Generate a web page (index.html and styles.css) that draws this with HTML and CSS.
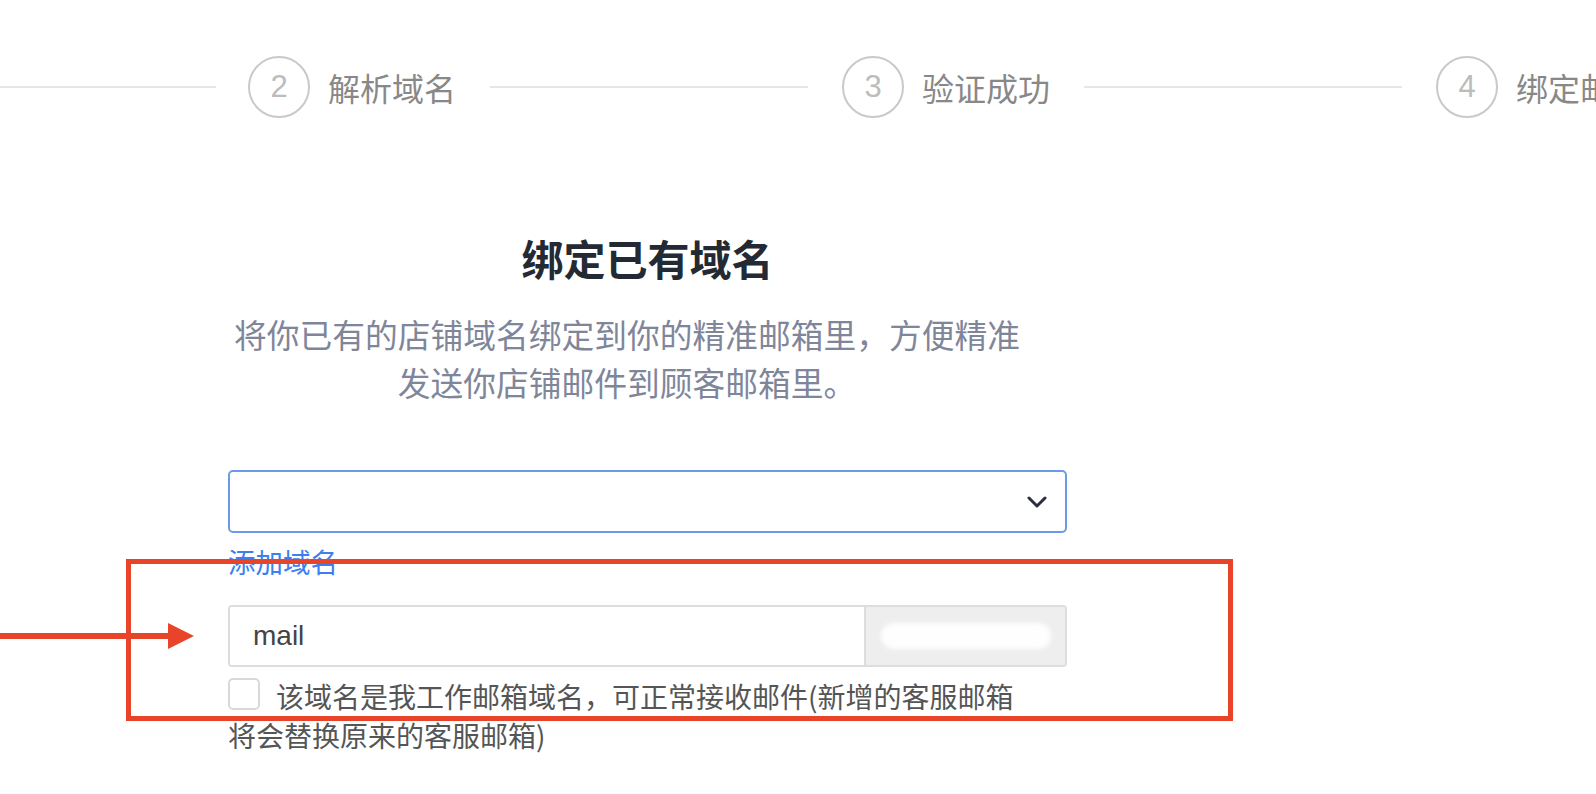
FILE: index.html
```html
<!DOCTYPE html>
<html lang="zh-CN">
<head>
<meta charset="utf-8">
<title>绑定已有域名</title>
<link rel="stylesheet" href="styles.css">
</head>
<body>
<div class="steps">
  <div class="step-line step-line-first"></div>
  <div class="step"><span class="step-num">2</span><span class="step-label">解析域名</span></div>
  <div class="step-line"></div>
  <div class="step"><span class="step-num">3</span><span class="step-label">验证成功</span></div>
  <div class="step-line"></div>
  <div class="step"><span class="step-num">4</span><span class="step-label">绑定邮箱</span></div>
</div>

<main class="form">
  <h1 class="title">绑定已有域名</h1>
  <p class="desc">将你已有的店铺域名绑定到你的精准邮箱里，方便精准<br>发送你店铺邮件到顾客邮箱里。</p>

  <div class="select">
    <span class="select-value"></span>
    <svg class="chevron" width="20" height="12" viewBox="0 0 20 12"><path d="M2 2 L10 10 L18 2" fill="none" stroke="#2a2f3d" stroke-width="3" stroke-linecap="round" stroke-linejoin="round"/></svg>
  </div>
  <a class="add-link">添加域名</a>

  <div class="input-group">
    <input class="input" type="text" value="mail">
    <div class="addon"><span class="smudge"></span></div>
  </div>

  <label class="agree"><span class="checkbox"></span>该域名是我工作邮箱域名，可正常接收邮件(新增的客服邮箱<br>将会替换原来的客服邮箱)</label>
</main>

<div class="annot-box"></div>
<svg class="annot-arrow" width="196" height="26" viewBox="0 0 196 26"><line x1="0" y1="13" x2="172" y2="13" stroke="#e8442a" stroke-width="6"/><polygon points="168,0 194,13 168,26" fill="#e8442a"/></svg>
</body>
</html>
```

FILE: styles.css
```css
html, body {
  margin: 0;
  padding: 0;
  background: #ffffff;
}
body {
  width: 1596px;
  height: 794px;
  overflow: hidden;
  position: relative;
  font-family: "Liberation Sans", "Noto Sans CJK SC", sans-serif;
}

/* steps */
.steps {
  display: flex;
  align-items: center;
  margin-top: 56px;
  height: 62px;
  width: max-content;
  white-space: nowrap;
}
.step-line {
  flex: none;
  width: 318px;
  height: 2px;
  background: #e6e6e6;
  margin: 0 34px;
}
.step-line-first {
  width: 216px;
  margin: 0 32px 0 0;
}
.step {
  flex: none;
  display: flex;
  align-items: center;
  gap: 18px;
}
.step-num {
  box-sizing: border-box;
  width: 62px;
  height: 62px;
  border: 2px solid #c9c9c9;
  border-radius: 50%;
  display: flex;
  align-items: center;
  justify-content: center;
  font-size: 31px;
  color: #bcbcbc;
}
.step-label {
  font-size: 32px;
  line-height: 1;
  color: #888888;
  font-family: "Noto Sans CJK SC", sans-serif;
}

/* form */
.form {
  margin-left: 228px;
  width: 839px;
  font-family: "Liberation Sans", "Noto Sans CJK SC", sans-serif;
}
.title {
  margin: 111px 0 0;
  font-size: 42px;
  line-height: 58px;
  font-weight: 700;
  text-align: center;
  color: #232a33;
  font-family: "Noto Sans CJK SC", sans-serif;
}
.desc {
  margin: 23px 0 0;
  width: 798px;
  font-size: 32.75px;
  line-height: 48px;
  text-align: center;
  color: #80869a;
  font-family: "Noto Sans CJK SC", sans-serif;
}
.select {
  box-sizing: border-box;
  margin-top: 64px;
  height: 63px;
  border: 2px solid #6b9be6;
  border-radius: 5px;
  display: flex;
  align-items: center;
  justify-content: space-between;
  padding: 0 18px 0 22px;
}
.chevron {
  display: block;
}
.add-link {
  display: block;
  margin-top: 10px;
  font-size: 27.5px;
  line-height: 36px;
  color: #3b7ff0;
  font-family: "Noto Sans CJK SC", sans-serif;
}
.input-group {
  box-sizing: border-box;
  margin-top: 26px;
  height: 62px;
  border: 2px solid #dddddd;
  border-radius: 4px;
  display: flex;
  overflow: hidden;
}
.input {
  flex: 1;
  min-width: 0;
  border: none;
  outline: none;
  padding: 0 0 0 23px;
  margin: 0;
  font-size: 28px;
  color: #444444;
  font-family: "Liberation Sans", "Noto Sans CJK SC", sans-serif;
  background: #ffffff;
}
.addon {
  flex: none;
  width: 199px;
  border-left: 2px solid #dddddd;
  background: #eeeeee;
  display: flex;
  align-items: center;
  justify-content: center;
}
.smudge {
  display: block;
  width: 170px;
  height: 26px;
  border-radius: 13px;
  background: #ffffff;
  filter: blur(2px);
  opacity: 0.95;
}
.agree {
  display: block;
  margin-top: 9.5px;
  font-size: 28px;
  line-height: 39px;
  color: #555555;
  font-family: "Noto Sans CJK SC", sans-serif;
}
.checkbox {
  box-sizing: border-box;
  display: inline-block;
  width: 32px;
  height: 32px;
  border: 2px solid #d9d9d9;
  border-radius: 5px;
  vertical-align: top;
  margin: 1.5px 16px 0 0;
  background: #ffffff;
}

/* annotation overlay */
.annot-box {
  position: absolute;
  left: 126px;
  top: 559px;
  width: 1107px;
  height: 162px;
  box-sizing: border-box;
  border: 5px solid #e8442a;
}
.annot-arrow {
  position: absolute;
  left: 0;
  top: 623px;
}
```
